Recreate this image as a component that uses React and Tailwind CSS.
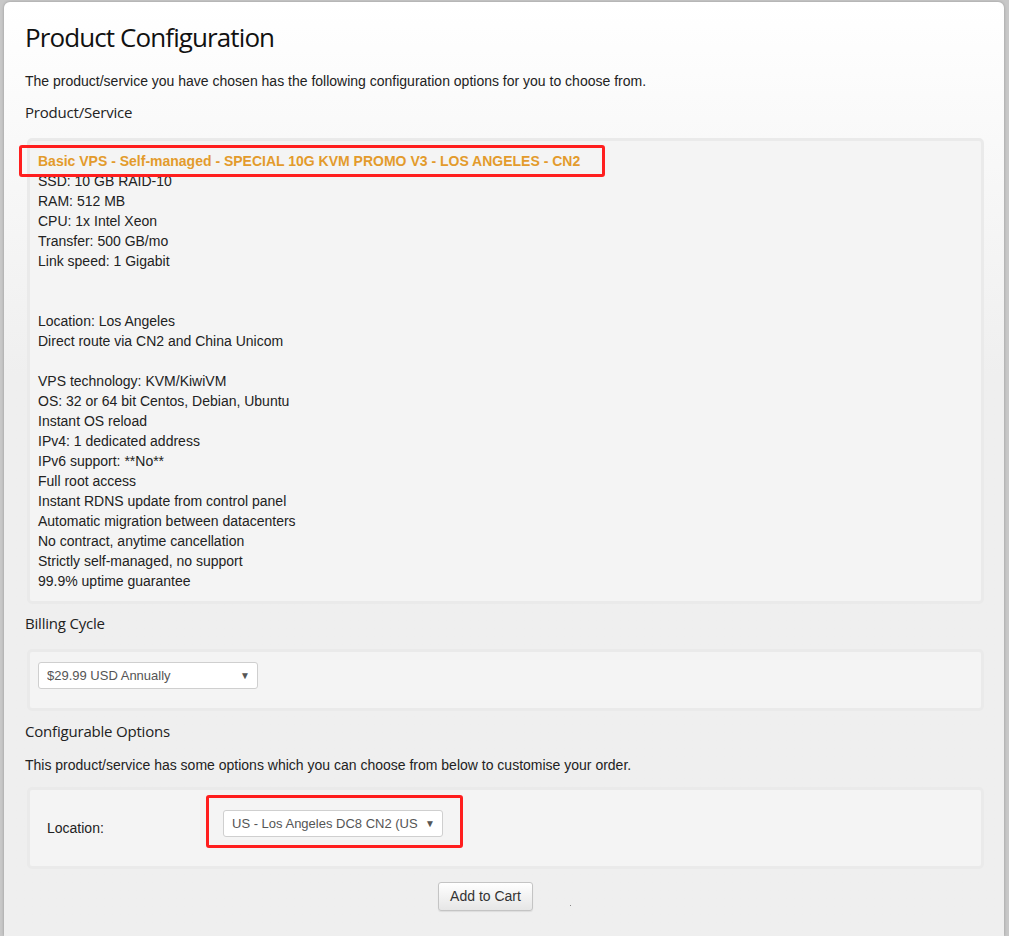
const specs1 = [
  "SSD: 10 GB RAID-10",
  "RAM: 512 MB",
  "CPU: 1x Intel Xeon",
  "Transfer: 500 GB/mo",
  "Link speed: 1 Gigabit",
  "",
  "",
  "Location: Los Angeles",
  "Direct route via CN2 and China Unicom",
  "",
  "VPS technology: KVM/KiwiVM",
  "OS: 32 or 64 bit Centos, Debian, Ubuntu",
  "Instant OS reload",
  "IPv4: 1 dedicated address",
  "IPv6 support: **No**",
  "Full root access",
  "Instant RDNS update from control panel",
  "Automatic migration between datacenters",
  "No contract, anytime cancellation",
  "Strictly self-managed, no support",
  "99.9% uptime guarantee",
];

const heading = "text-[15px] text-[#222] font-['Open_Sans',sans-serif] tracking-[-0.2px]";

function Select({ value, width }) {
  return (
    <div className={`${width} h-[27px] bg-white border border-[#cfcfcf] rounded-[3px] flex items-center justify-between pl-[8px] pr-[7px]`}>
      <span className="text-[13px] text-[#555] whitespace-nowrap overflow-hidden min-w-0">{value}</span>
      <span className="text-[10px] text-[#555] pl-[6px] leading-none shrink-0">▼</span>
    </div>
  );
}

export default function App() {
  return (
    <div className="min-h-[936px] bg-[#c8c8c8] pl-[4px] pr-[5px] pt-[2px] font-['Liberation_Sans',Arial,sans-serif]">
      <div className="min-h-[934px] rounded-t-[6px] bg-gradient-to-b from-white to-[#efefef] to-[40%] shadow-[0_0_3px_rgba(0,0,0,0.25)] pl-[21px] pr-[20px] pt-[18px] pb-6 text-[#222]">
        <h1 className="text-[26px] leading-[34px] text-[#111] font-['Open_Sans',sans-serif] tracking-[-0.9px]">Product Configuration</h1>

        <p className="mt-[17px] text-[14px] leading-[20px]">
          The product/service you have chosen has the following configuration options for you to choose from.
        </p>

        <h2 className={`${heading} mt-[10px] leading-[22px]`}>Product/Service</h2>

        <div className="mt-[15px] ml-[2px] border-[3px] border-[#eaeaea] rounded-[5px] bg-[#f4f4f4] pl-[8px] pt-[10px] pb-[10px]">
          <div className="relative">
            <div className="absolute left-[-19px] top-[-6px] w-[586px] h-[32px] border-[3px] border-[#ff1e1e] rounded-[3px]" />
            <p className="text-[14px] leading-[20px] font-bold text-[#e39b2c]">
              Basic VPS - Self-managed - SPECIAL 10G KVM PROMO V3 - LOS ANGELES - CN2
            </p>
          </div>
          {specs1.map((s, i) => (
            <p key={i} className="text-[14px] leading-[20px] h-[20px]">{s}</p>
          ))}
        </div>

        <h2 className={`${heading} mt-[7px] leading-[24px]`}>Billing Cycle</h2>

        <div className="mt-[14px] ml-[2px] border-[3px] border-[#eaeaea] rounded-[5px] bg-[#f4f4f4] pl-[8px] pt-[10px] pb-[19px]">
          <Select value="$29.99 USD Annually" width="w-[220px]" />
        </div>

        <h2 className={`${heading} mt-[8px] leading-[24px]`}>Configurable Options</h2>

        <p className="mt-[12px] text-[14px] leading-[20px]">
          This product/service has some options which you can choose from below to customise your order.
        </p>

        <div className="mt-[12px] ml-[2px] border-[3px] border-[#eaeaea] rounded-[5px] bg-[#f4f4f4] pt-[18px] pb-[27px] flex items-center">
          <span className="w-[193px] pl-[17px] text-[14px] pt-[10px]">Location:</span>
          <div className="relative">
            <div className="absolute left-[-17px] top-[-15px] w-[257px] h-[53px] border-[3px] border-[#ff1e1e] rounded-[3px]" />
            <Select value="US - Los Angeles DC8 CN2 (US" width="w-[220px]" />
          </div>
        </div>

        <div className="mt-[13px] flex justify-center items-end gap-[37px]">
          <button className="h-[29px] px-[11px] text-[14px] text-[#333] bg-gradient-to-b from-white to-[#e6e6e6] border border-[#c4c4c4] rounded-[3px] shadow-[0_1px_1px_rgba(0,0,0,0.08)]">
            Add to Cart
          </button>
          <span className="w-[1px] h-[1px] bg-[#888] mb-[5px]" />
        </div>
      </div>
    </div>
  );
}
